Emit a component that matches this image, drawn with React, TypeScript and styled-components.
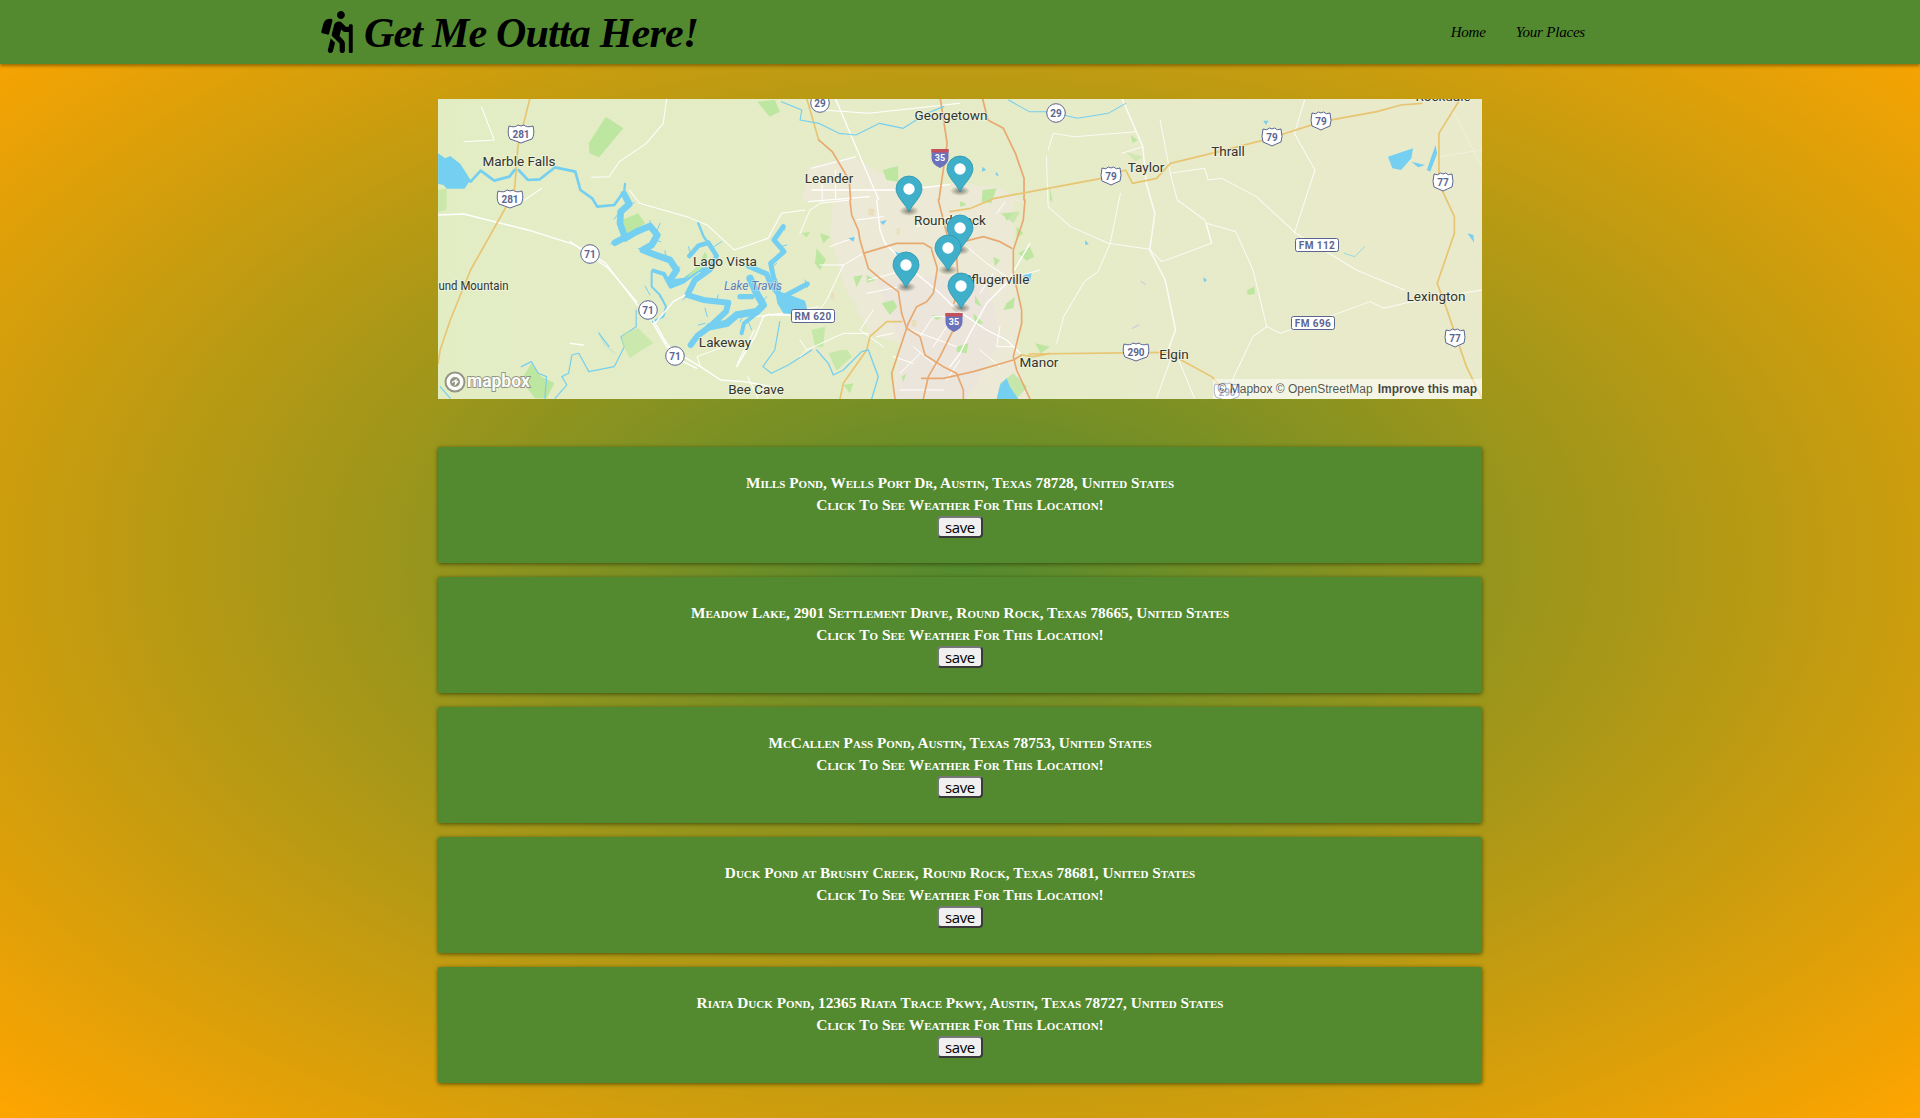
import React from 'react';
import styled, { createGlobalStyle } from 'styled-components';
import { FaHiking } from 'react-icons/fa';

const GlobalStyle = createGlobalStyle`
  html, body {
    margin: 0;
    padding: 0;
  }
  body {
    font-family: "Liberation Serif", serif;
  }
`;

const Page = styled.div`
  min-height: 100vh;
  background: radial-gradient(#538a2f, orange);
`;

const NavBar = styled.nav`
  height: 64px;
  background-color: #538a2f;
  box-shadow: 0 2px 3px rgba(90, 60, 0, 0.55);
`;

const NavInner = styled.div`
  width: 1280px;
  height: 100%;
  margin: 0 auto;
  display: flex;
  align-items: center;
  justify-content: space-between;
`;

const Brand = styled.a`
  display: flex;
  align-items: center;
  gap: 10px;
  padding-top: 2px;
  color: #000;
  font-size: 42px;
  font-style: italic;
  font-weight: bold;
  letter-spacing: -0.8px;
  white-space: nowrap;

  svg {
    width: 34px;
    height: 42px;
    margin-top: -2px;
  }
`;

const NavLinks = styled.ul`
  display: flex;
  gap: 30px;
  margin: 0;
  padding: 0 15px 0 0;
  list-style: none;
`;

const NavLink = styled.a`
  color: #000;
  font-size: 15px;
  font-style: italic;
  letter-spacing: -0.2px;
`;

const Content = styled.main`
  width: 1044px;
  margin: 0 auto;
  padding: 35px 0 34px;
  display: flex;
  flex-direction: column;
`;

const MapFrame = styled.div`
  position: relative;
  height: 300px;
  margin-bottom: 48px;
  overflow: hidden;
  background-color: #e6ebc9;

  > svg {
    display: block;
    width: 100%;
    height: 100%;
  }
`;

const Attribution = styled.div`
  position: absolute;
  right: 0;
  bottom: 0;
  height: 20px;
  padding: 0 5px;
  display: flex;
  align-items: center;
  gap: 5px;
  background: rgba(255, 255, 255, 0.5);
  color: rgba(0, 0, 0, 0.68);
  font: 12px "Liberation Sans", sans-serif;
  white-space: nowrap;

  b {
    color: rgba(0, 0, 0, 0.72);
  }
`;

const PlaceList = styled.div`
  display: flex;
  flex-direction: column;
  gap: 14px;
`;

const PlaceCard = styled.section`
  padding: 25px 0 25px;
  background-color: #538a2f;
  box-shadow: 0 1px 4px rgba(40, 50, 0, 0.75);
  border-radius: 2px;
  color: #fff;
  text-align: center;
  font-weight: bold;
  font-variant: small-caps;
  line-height: 22px;
`;

const PlaceName = styled.div`
  font-size: 15.3px;
`;

const WeatherHint = styled.div`
  font-size: 15.5px;
`;

const SaveButton = styled.button`
  display: block;
  width: 46px;
  height: 22px;
  margin: 0 auto;
  padding: 0;
  background: #f0f0f0;
  border-style: solid;
  border-width: 2px;
  border-color: #777 #3a3a3a #3a3a3a #777;
  border-radius: 4px;
  color: #000;
  font: 15px "Open Sans", sans-serif;
  font-variant: normal;
  letter-spacing: -0.4px;
  line-height: 16px;
`;

const places = [
  'Mills Pond, Wells Port Dr, Austin, Texas 78728, United States',
  'Meadow Lake, 2901 Settlement Drive, Round Rock, Texas 78665, United States',
  'McCallen Pass Pond, Austin, Texas 78753, United States',
  'Duck Pond at Brushy Creek, Round Rock, Texas 78681, United States',
  'Riata Duck Pond, 12365 Riata Trace Pkwy, Austin, Texas 78727, United States',
];

const labels: [string, number, number][] = [
  ['Marble Falls', 81, 62],
  ['Leander', 391, 79],
  ['Georgetown', 513, 16],
  ['Round Rock', 512, 121],
  ['Lago Vista', 287, 162],
  ['Lakeway', 287, 243],
  ['Bee Cave', 318, 290],
  ['Thrall', 790, 52],
  ['Taylor', 708, 68],
  ['Pflugerville', 558, 180],
  ['Manor', 601, 263],
  ['Elgin', 736, 255],
  ['Lexington', 998, 197],
  ['Rockdale', 1005, -3],
];

const usShields: [string, number, number][] = [
  ['281', 83, 35],
  ['281', 72, 100],
  ['79', 673, 77],
  ['79', 834, 38],
  ['79', 883, 22],
  ['77', 1005, 83],
  ['77', 1017, 239],
  ['290', 698, 253],
  ['290', 789, 293],
];

const circleShields: [string, number, number][] = [
  ['71', 152, 155],
  ['71', 210, 211],
  ['71', 237, 257],
  ['29', 382, 4],
  ['29', 618, 14],
];

const boxShields: [string, number, number][] = [
  ['RM 620', 375, 217],
  ['FM 112', 879, 146],
  ['FM 696', 875, 224],
];

// head centre of each marker, drawn back to front
const markers: [number, number][] = [
  [522, 70],
  [471, 90],
  [522, 129],
  [468, 166],
  [510, 149],
  [523, 187],
];

const MapDrawing: React.FC = () => (
  <svg viewBox="0 0 1044 300">
    <defs>
      <linearGradient id="land" x1="0" y1="0" x2="1" y2="0">
        <stop offset="0" stopColor="#e3edc4" />
        <stop offset="0.6" stopColor="#e6ebc8" />
        <stop offset="1" stopColor="#e9eacb" />
      </linearGradient>
      <radialGradient id="markerShadow">
        <stop offset="0" stopColor="#5c5c50" stopOpacity="0.75" />
        <stop offset="1" stopColor="#5c5c50" stopOpacity="0" />
      </radialGradient>
    </defs>
    <rect width="1044" height="300" fill="url(#land)" />

    {/* west half, traced at 3x */}
    <g transform="translate(-8 -9) scale(0.338 0.3333)" fill="none" strokeLinejoin="round" strokeLinecap="round">
      <path fill="#ece9d6" d="M1120 230L1250 200L1400 290L1568 290V335H1100Z" />
      <g fill="#bde6a0">
        <path d="M470 160L520 80L572 115L500 202L472 190Z" />
        <path d="M968 35L1020 30L1035 65L1005 80Z" />
        <path d="M1340 240L1385 228L1385 275L1350 270Z" />
        <path d="M270 870L300 820L330 860L368 880L345 925H310Z" />
        <path d="M24 300L50 295L48 360L24 365Z" opacity="0.7" />
      </g>

      <g stroke="#fff" strokeWidth="3">
        <path d="M24 375L100 372L290 420L430 465L520 520L610 640L660 700L700 770L800 830L860 870L930 875L1010 890" strokeWidth="4" />
        <path d="M590 300L620 340L760 380L820 405L900 480L1000 445L1040 370L1110 360" />
        <path d="M700 27L690 100L640 160L560 215L530 260L478 262" />
        <path d="M152 50L190 150M190 150L100 155M330 295L280 330" />
        <path d="M960 680L1040 670L1150 650" />
        <path d="M800 830L790 800L870 770M910 820L960 720M940 860L970 925" />
        <path d="M1200 27L1260 170L1330 335" strokeWidth="4" />
        <path d="M1130 235L1260 200M1160 60L1300 70L1568 40" />
        <path d="M1130 300L1400 300L1568 280M1120 335L1300 320" strokeWidth="4" />
        <path d="M1160 270V335M1200 240V335" />
      </g>

      <g stroke="#e8c573" strokeWidth="5">
        <path d="M295 27L260 170L250 300L220 360L120 540L60 690L30 780L24 820" />
        <path d="M1115 27L1150 150" />
      </g>
      <g stroke="#e8a970" strokeWidth="5">
        <path d="M1150 150L1190 185L1240 270L1245 335" />
        <path d="M1510 27L1530 160L1505 335" />
      </g>

      <path fill="#75cff0" d="M24 190L45 205L60 198L90 222L120 270L102 296L50 296L40 285L24 282Z" />
      <g stroke="#75cff0" strokeWidth="8">
        <path d="M120 275L150 242L190 272L235 260L250 240M262 240L290 270L325 268L370 232L430 245L445 300L480 325L495 350L545 345L570 310" />
      </g>
      <g stroke="#75cff0" strokeWidth="3.5">
        <path d="M610 660L610 710L565 740L575 770L545 830L470 845L440 790L420 795L410 850L390 860L405 885L370 925" />
        <path d="M1035 695L1020 780L985 830L1010 850L1060 825L1130 780" />
        <path d="M30 890L60 925M270 830L300 815L320 850L345 860L340 925M500 730L530 770" />
        <path d="M1040 35L1100 60L1095 90L1150 100L1210 130L1260 135L1330 100L1400 115L1470 70L1520 50" />
      </g>
    </g>

    {/* Lake Travis, traced at 3x */}
    <g transform="translate(132 81) scale(0.3333)" fill="none" strokeLinejoin="round" strokeLinecap="round">
      <path fill="#bde6a0" d="M155 120L205 100L225 130L175 165L155 150Z" />
      <path fill="#bde6a0" d="M160 460L205 445L250 490L215 510L180 535L155 490Z" opacity="0.65" />
      <g stroke="#75cff0" strokeWidth="20">
        <path d="M162 42L178 72L152 95L150 130L165 172L135 188" />
        <path d="M165 175L200 155L240 138L262 165L245 195L218 210L260 226L300 240L320 270L300 300" />
        <path d="M305 305L345 300L385 270L420 268L440 228L415 188L385 197L358 228" strokeWidth="14" />
        <path d="M420 268L375 300L352 345L400 360L475 368L468 395L422 438L382 468L362 495" strokeWidth="18" />
        <path d="M420 440L470 430L500 405L560 395L580 375L560 340L540 295" strokeWidth="22" />
        <path d="M560 400L522 430L515 460" strokeWidth="12" />
        <path d="M510 350L545 350M535 258L590 282L602 312L628 345" strokeWidth="16" />
        <path d="M640 140L612 180L642 215L602 250L610 290L625 330" strokeWidth="15" />
        <path d="M650 345L712 312" strokeWidth="15" />
        <path d="M250 272L282 282L302 320L340 305" strokeWidth="12" />
      </g>
      <path fill="#bde6a0" d="M345 298L385 255L405 215L412 228L392 268Z" />
      <path fill="#75cff0" d="M615 330L660 345L705 362L712 390L665 402L640 400L622 370Z" />
      <g stroke="#75cff0" strokeWidth="3">
        <path d="M245 275L245 320L270 345L288 380L280 410L248 425" strokeWidth="6" />
        <path d="M385 130L402 172L415 188M165 12L162 42" strokeWidth="7" />
        <path d="M150 95L132 118M192 68L178 72M122 192L140 180M240 122L240 140M270 130L262 150M272 185L255 180M205 205L222 208M285 212L288 232M330 262L318 262M355 200L362 222M455 185L432 200M445 345L440 360M405 385L412 410M385 435L405 430M590 350L578 365M510 425L520 405M545 450L535 425M650 195L632 200M620 250L605 262M705 300L712 322M640 135L645 150M355 345L338 360M240 345L225 318M280 360L268 350" />
      </g>
      <path d="M85 455L105 495L135 520" stroke="#75cff0" strokeWidth="2" opacity="0.7" />
      <path d="M0 185L115 265L200 365M0 490L40 495M250 420L290 490L340 545L380 565M255 430L310 365L345 345M600 405L660 405M500 560L555 470L580 410L600 402" stroke="#fff" strokeWidth="4" />
    </g>

    {/* Austin and the roads round it, traced at 3x */}
    <g transform="translate(362 101) scale(0.3333)" fill="none" strokeLinejoin="round" strokeLinecap="round">
      <path fill="#ece9d6" d="M100 0H640L640 200L665 350L650 480L690 597H275L300 430L210 400L130 250L90 100Z" />
      <path fill="#ece5dc" d="M230 240L560 220L600 420L500 597H285L305 430Z" />
      <g fill="#bde6a0">
        <path d="M280 300L245 310L270 345L292 320Z" />
        <path d="M620 310L645 290L640 325L610 330Z" />
        <path d="M655 160L690 140L702 170L680 182Z" />
        <path d="M520 340L550 370L525 375Z" />
        <path d="M470 440L505 430L500 460L470 455Z" />
        <path d="M125 450L142 450L155 470L110 512L95 480L85 460Z" opacity="0.75" />
        <path d="M35 390L75 380L70 440L45 440Z" opacity="0.8" />
        <path d="M600 550L640 520L682 560L650 597H610Z" opacity="0.8" />
        <path d="M705 430L750 440L722 460Z" />
        <path d="M60 100L90 110L70 130Z" />
        <path d="M610 40L640 40L620 62Z" />
        <path d="M5 100L30 95L20 112Z" />
        <path d="M50 145L78 180L60 210L45 190Z" />
        <path d="M160 230L188 225L170 262Z" />
        <path d="M200 225L228 240L200 248Z" />
        <path d="M580 170L600 180L585 200Z" />
        <path d="M395 345L430 350L410 360Z" />
        <path d="M525 285L545 320L525 310Z" />
        <path d="M650 80L670 100L650 115Z" />
        <path d="M305 530L320 520L310 545Z" />
        <path d="M130 555L160 550L150 580Z" />
        <path d="M480 0L500 15L480 20Z" />
        <path d="M600 40L660 35L640 70Z" opacity="0.7" />
      </g>
      <g fill="#e9dfbf">
        <path d="M205 25L225 28L222 48L205 45Z" />
        <path d="M335 360L350 360L350 380L335 380Z" />
        <path d="M290 85L300 85L298 105L290 105Z" />
        <path d="M95 275L105 280L100 300L92 295Z" />
      </g>
      <g stroke="#fff" strokeWidth="3">
        <path d="M60 195L130 195L190 160M130 195L80 300L30 370M0 335L30 370" />
        <path d="M230 0L240 90L255 130L330 205L420 280L460 320L500 350L560 390L620 420L660 460" strokeWidth="4" />
        <path d="M690 130L620 250L560 310L510 400L480 460L450 500" strokeWidth="4" />
        <path d="M0 100L30 30L60 10L150 0M205 240L280 220L330 205M320 385L470 440M230 410L280 400" />
        <path d="M500 140L560 190L620 230M280 470L340 490M360 410L400 350L440 350M300 570L430 570M350 80L470 45M620 0L590 40M600 380L590 440L650 440" />
        <path d="M200 280L300 260M90 140L170 110M170 60L250 50M400 440L440 380M340 440L410 500M300 520L360 460M440 540L480 480M540 450L600 500M220 330L180 390L250 440" />
        <path d="M650 230L720 210M540 280L580 220M20 450L0 470M0 420L20 450L130 400L205 400" />
      </g>
      <g stroke="#e8a970" strokeWidth="5">
        <path d="M150 0L155 45L175 90L180 120L205 205L240 235L295 275L305 340L320 385L360 410L375 465L430 500L470 520L490 570L490 597" />
        <path d="M190 160L290 130L370 130L395 145M490 125L550 110L600 125L635 145" />
        <path d="M415 0L430 60L440 100L470 170L475 250L462 310" />
        <path d="M395 150L412 205L400 280L380 305L350 320L325 370L305 430L275 520L285 597" />
        <path d="M460 390L420 470L385 530L370 597" />
        <path d="M675 0L670 60L640 150L640 220L665 330L665 370L640 470L650 510L690 597" />
        <path d="M365 535L430 535L520 515L640 480L665 465" />
      </g>
      <g stroke="#e8c573" strokeWidth="5">
        <path d="M120 597L130 550L200 450L210 410L260 365L305 365" />
        <path d="M665 465L700 470L750 460" />
      </g>
      <g stroke="#75cff0" strokeWidth="4">
        <path d="M50 450L85 490L100 525L130 510L185 455L205 450L235 530L215 597" />
      </g>
      <g fill="#75cff0">
        <path d="M590 597L600 555L620 535L630 560L655 597Z" />
        <path d="M670 225L695 220L690 245L670 250Z" />
        <path d="M145 115L165 110L160 125Z" />
        <path d="M240 65L260 60L250 75Z" />
        <path d="M285 155L300 160L290 165Z" />
      </g>
    </g>

    {/* east half, traced at 3x */}
    <g transform="translate(512 -9) scale(0.3443 0.3333)" fill="none" strokeLinejoin="round" strokeLinecap="round">
      <path fill="#ece9d6" d="M0 280L135 290L215 335H0Z" />
      <g fill="#bde6a0">
        <path d="M95 300L135 295L120 340L92 335Z" />
        <path d="M862 600L885 590L885 612L865 615Z" />
        <path d="M525 135L545 150L530 160ZM290 290L298 335L290 330Z" />
        <path d="M510 185L560 200L540 215Z" opacity="0.5" />
      </g>
      <g stroke="#fff" strokeWidth="3" strokeOpacity="0.8">
        <path d="M500 27L560 170L570 280L595 370L580 480L625 570L655 720L630 790" strokeWidth="4.5" />
        <path d="M285 180L300 130L360 140L540 125M280 200L285 350L350 410L460 460L580 478L615 515L760 460L745 400L830 425L880 540L920 710L960 730L1100 680L1220 635L1260 655L1340 635L1545 600" />
        <path d="M465 460L430 545L390 575L330 680L310 760M1000 430L1060 240L1000 130M640 250L740 235L750 270L790 265L890 320L1005 430L1180 540L1320 600M920 710L880 740L820 870" />
        <path d="M495 310L465 460M610 90L640 250L660 330L740 390L760 460M1030 30L1000 130" />
        <path d="M660 800L710 925M640 810L600 925M500 190L560 170" />
        <path d="M1460 60L1545 230M1420 200L1545 180" strokeWidth="2" opacity="0.6" />
      </g>
      <g stroke="#e8a970" strokeWidth="5">
        <path d="M95 27L110 90L155 115L190 190L215 265L215 330" />
      </g>
      <g stroke="#e8c573" strokeWidth="5">
        <path d="M0 365L60 355L130 325L440 265L510 240L530 280L600 265L640 220L760 190L930 145L1080 95L1240 65L1310 45L1370 40" />
        <path d="M1480 30L1420 130L1420 280L1465 380L1465 430L1415 580L1440 650L1500 830L1545 925" />
        <path d="M230 792L630 787L760 860L820 925" />
      </g>
      <g fill="#75cff0">
        <path d="M1272 200L1345 175L1340 205L1310 240L1285 235Z" />
        <path d="M1340 215L1380 225L1360 232ZM1410 165L1415 190L1395 245L1385 240Z" />
        <path d="M1503 430L1520 435L1522 458Z" />
        <path d="M910 92L925 92L918 105ZM95 230L105 240L92 245ZM135 245L142 258L132 255ZM392 450L403 462L393 465ZM735 562L747 570L738 577Z" />
      </g>
      <g stroke="#75cff0" strokeWidth="3">
        <path d="M170 30L230 65L290 65L370 85L460 70L510 40" />
        <path d="M1145 490L1175 500L1205 470" strokeWidth="2" />
      </g>
      <g stroke="#c7c9dd" strokeWidth="3">
        <path d="M555 575L568 583M530 715L548 705" />
      </g>
    </g>

    <g fontFamily="Roboto, sans-serif" fontSize="13.5" fill="#33352e" textAnchor="middle" stroke="#f2f4e4" strokeWidth="2" paintOrder="stroke" strokeOpacity="0.7">
      {labels.map(([name, x, y]) => (
        <text key={name} x={x} y={y + 5}>
          {name}
        </text>
      ))}
      <text x="35.5" y="191" textLength="70" lengthAdjust="spacingAndGlyphs">
        und Mountain
      </text>
      <text x="315" y="191" fontStyle="italic" fontSize="12" fill="#5d80bb" strokeOpacity="0.4">
        Lake Travis
      </text>
    </g>

    <g fontFamily="Roboto, sans-serif" fontWeight="bold" fill="#5b6690" textAnchor="middle">
      {usShields.map(([num, x, y], i) => (
        <g key={i} transform={`translate(${x} ${y})`}>
          <path
            d={
              num.length > 2
                ? 'M-12 -8Q-6 -6 -3 -9Q0 -7 3 -9Q6 -6 12 -8Q14 0 11 5Q5 7 0 9Q-5 7 -11 5Q-14 0 -12 -8Z'
                : 'M-9 -8Q-5 -6 -2.5 -9Q0 -7 2.5 -9Q5 -6 9 -8Q11 0 9 5Q4 7 0 9Q-4 7 -9 5Q-11 0 -9 -8Z'
            }
            fill="#fff"
            stroke="#5b6690"
            strokeWidth="1"
          />
          <text y="3.5" fontSize="10">
            {num}
          </text>
        </g>
      ))}
      {circleShields.map(([num, x, y], i) => (
        <g key={i} transform={`translate(${x} ${y})`}>
          <circle r="9.3" fill="#fff" stroke="#5b6690" strokeWidth="1" />
          <text y="3.5" fontSize="10">
            {num}
          </text>
        </g>
      ))}
      {boxShields.map(([name, x, y]) => (
        <g key={name} transform={`translate(${x} ${y})`}>
          <rect x="-21.5" y="-6.5" width="43" height="13" rx="2" fill="#fff" stroke="#5b6690" strokeWidth="1" />
          <text y="3.5" fontSize="10" letterSpacing="0.4">
            {name}
          </text>
        </g>
      ))}
      {[[502, 59], [516, 223]].map(([x, y]) => (
        <g key={x} transform={`translate(${x} ${y})`}>
          <path d="M-8.5 -9H8.5V0Q8.5 6 0 10Q-8.5 6 -8.5 0Z" fill="#6a72bb" />
          <path d="M-8.5 -9H8.5V-5.5H-8.5Z" fill="#c4505a" />
          <text y="3" fontSize="9" fill="#fff">
            35
          </text>
        </g>
      ))}
    </g>

    {markers.map(([x, y]) => (
      <g key={`${x}-${y}`} transform={`translate(${x} ${y})`}>
        <ellipse cy="22" rx="10" ry="5" fill="url(#markerShadow)" />
        <path
          d="M0 22.5C-3 16 -13 7.5 -13 0A13 13 0 0 1 13 0C13 7.5 3 16 0 22.5Z"
          fill="#3fafca"
          stroke="#2e94ae"
          strokeWidth="0.8"
        />
        <circle r="5.7" fill="#fff" />
      </g>
    ))}

    <g opacity="0.9">
      <circle cx="17" cy="283" r="9.5" fill="#fff" stroke="#8c8c80" strokeWidth="2" />
      <circle cx="17" cy="283" r="5" fill="#8c8c80" />
      <path d="M14 283.5L18 281L17.5 285L20 282" stroke="#fff" strokeWidth="1.4" fill="none" />
      <text
        x="29"
        y="288"
        fontFamily="Roboto, sans-serif"
        fontWeight="bold"
        fontSize="17.5"
        fill="#fff"
        stroke="#8c8c80"
        strokeWidth="1.8"
        paintOrder="stroke"
      >
        mapbox
      </text>
    </g>
  </svg>
);

export default function App() {
  return (
    <Page>
      <GlobalStyle />
      <NavBar>
        <NavInner>
          <Brand>
            <FaHiking />
            Get Me Outta Here!
          </Brand>
          <NavLinks>
            <li>
              <NavLink>Home</NavLink>
            </li>
            <li>
              <NavLink>Your Places</NavLink>
            </li>
          </NavLinks>
        </NavInner>
      </NavBar>
      <Content>
        <MapFrame>
          <MapDrawing />
          <Attribution>
            <span>© Mapbox © OpenStreetMap</span>
            <b>Improve this map</b>
          </Attribution>
        </MapFrame>
        <PlaceList>
          {places.map((place) => (
            <PlaceCard key={place}>
              <PlaceName>{place}</PlaceName>
              <WeatherHint>Click To See Weather For This Location!</WeatherHint>
              <SaveButton>save</SaveButton>
            </PlaceCard>
          ))}
        </PlaceList>
      </Content>
    </Page>
  );
}
